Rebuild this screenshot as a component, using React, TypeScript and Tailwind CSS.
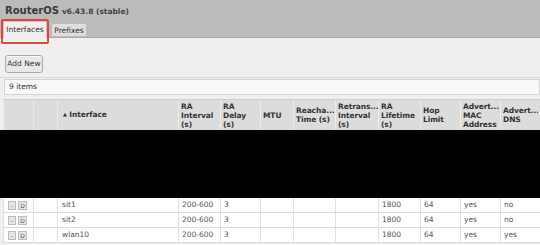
import React from 'react';

const cols = [30, 24, 121, 42, 40, 33, 42, 43, 42, 40, 40, 38];

const headers: React.ReactNode[] = [
  '',
  '',
  <span className="pl-[3px]"><span className="text-[5px] align-middle">▲</span> Interface</span>,
  <>RA<br />Interval<br />(s)</>,
  <>RA<br />Delay<br />(s)</>,
  'MTU',
  <>Reacha...<br />Time (s)</>,
  <>Retrans...<br />Interval<br />(s)</>,
  <>RA<br />Lifetime<br />(s)</>,
  <>Hop<br />Limit</>,
  <>Advert...<br />MAC<br />Address</>,
  <>Advert...<br />DNS</>,
];

const rows = [
  { name: 'sit1', dns: 'no' },
  { name: 'sit2', dns: 'no' },
  { name: 'wlan10', dns: 'yes' },
];

export default function App() {
  return (
    <div className="w-[540px] h-[245px] overflow-hidden bg-[#efefef] text-[#333] font-['DejaVu_Sans',sans-serif]">
      {/* Title bar + tabs */}
      <div className="h-[38px] bg-[#bbbbbb] border-b border-[#a9a9a9] relative">
        <div className="pl-[5px] pt-[3px] leading-[12px] whitespace-nowrap">
          <span className="text-[10px] font-bold text-[#3a3a3a]">RouterOS</span>
          <span className="text-[7.5px] font-bold text-[#444] ml-[3px]">v6.43.8 (stable)</span>
        </div>
        <div className="flex items-end gap-[4px] pl-[3px] absolute left-0 bottom-[-1px]">
          <div className="w-[44px] h-[17px] bg-[#efefef] border border-b-0 border-[#c8c8c8] rounded-t-[2px] text-[7.5px] leading-[16px] text-center">
            Interfaces
          </div>
          <div className="w-[36px] h-[14px] bg-[#dedede] border border-[#bdbdbd] rounded-t-[2px] text-[7.5px] leading-[13px] text-center mb-[1px]">
            Prefixes
          </div>
        </div>
        <div className="absolute left-[1px] top-[19px] w-[48px] h-[25px] border-2 border-[#e2453f] rounded-[2px]" />
      </div>

      {/* Toolbar */}
      <div className="pt-[11px] pl-[5px] h-[40px] border-b border-[#dadada]">
        <button className="w-[38px] h-[18px] bg-[#e9e9e9] border border-[#aaaaaa] rounded-[3px] text-[7.5px] leading-[16px] text-[#333] shadow-[inset_0_1px_0_#fff]">
          Add New
        </button>
      </div>

      <div className="pl-[4px] pt-[1px]">
        <div className="h-[16px] bg-[#f9f9f9] border border-[#d4d4d4] text-[7.5px] leading-[14px] pl-[4px]">
          9 items
        </div>
      </div>

      {/* Table header */}
      <div className="pl-[3px] pt-[4px]">
        <div className="flex h-[31px] bg-[#dcdcdc] border-t border-[#cfcfcf]">
          {headers.map((h, i) => (
            <div
              key={i}
              style={{ width: cols[i] }}
              className="shrink-0 border-l border-[#ececec] flex items-center pl-[2px] text-[7.5px] font-bold leading-[9px] tracking-[-0.1px] whitespace-nowrap overflow-hidden"
            >
              <div>{h}</div>
            </div>
          ))}
        </div>
      </div>

      {/* Redacted area */}
      <div className="h-[68px] bg-black" />

      {/* Rows */}
      <div className="pl-[3px]">
        {rows.map((r) => {
          const cells: React.ReactNode[] = [
            <div className="flex gap-[2px] pl-[4px]">
              <span className="w-[8px] h-[9px] bg-[#e6e6e6] border border-[#bbb] text-[6px] leading-[7px] text-center">-</span>
              <span className="w-[9px] h-[9px] bg-[#e6e6e6] border border-[#bbb] text-[6px] leading-[7px] text-center">D</span>
            </div>,
            '',
            r.name,
            '200-600',
            '3',
            '',
            '',
            '',
            '1800',
            '64',
            'yes',
            r.dns,
          ];
          return (
            <div key={r.name} className="flex h-[15px] bg-white border-b border-[#dedede]">
              {cells.map((c, i) => (
                <div
                  key={i}
                  style={{ width: cols[i] }}
                  className={
                    'shrink-0 border-l border-[#e2e2e2] flex items-center text-[7.5px] text-[#555] whitespace-nowrap ' +
                    (i === 0 ? '' : i === 2 ? 'pl-[4px]' : 'pl-[3px]')
                  }
                >
                  {c}
                </div>
              ))}
            </div>
          );
        })}
      </div>
    </div>
  );
}
